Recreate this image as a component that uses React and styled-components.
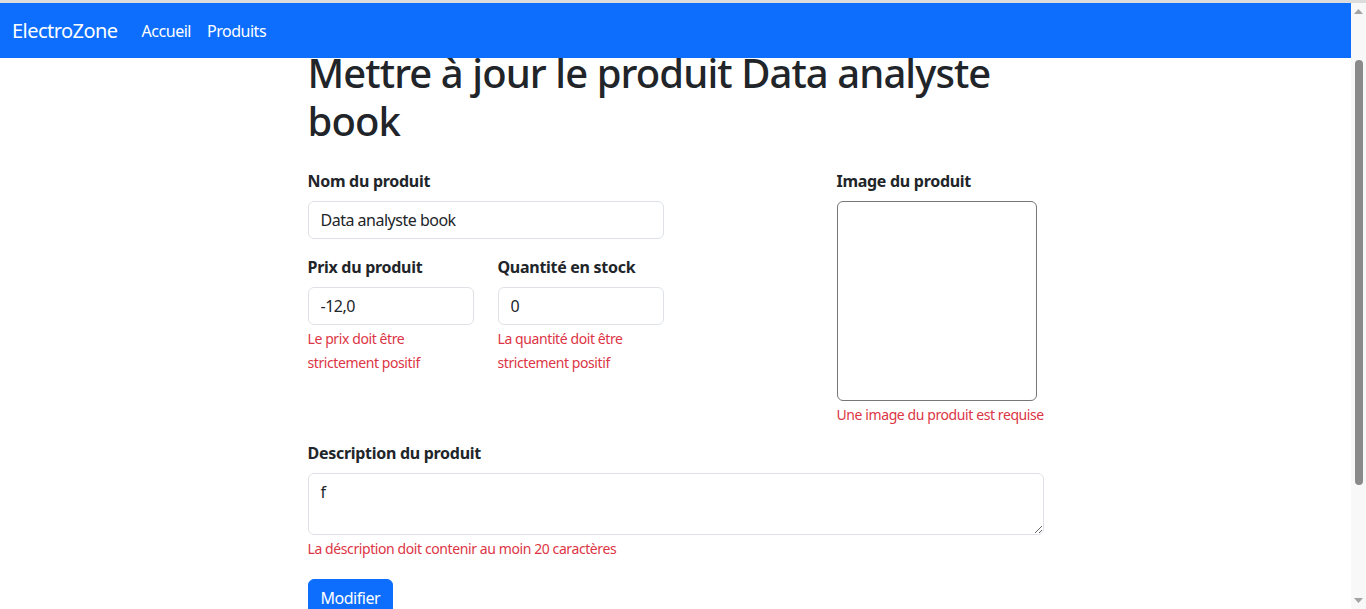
import React from "react";
import styled, { createGlobalStyle } from "styled-components";

const FONT = `"Noto Sans", "Open Sans", Arial, sans-serif`;

const GlobalStyle = createGlobalStyle`
  html, body { margin: 0; padding: 0; height: 100%; overflow: hidden; }
  body { font-family: ${FONT}; color: #212529; background: #fff; letter-spacing: -0.028em; }
  * { box-sizing: border-box; }
`;

const Screen = styled.div`
  display: flex;
  height: 609px;
  border-top: 3px solid #dcdcdc;
`;

const Main = styled.div`
  flex: 1;
  display: flex;
  flex-direction: column;
  overflow: hidden;
  min-width: 0;
`;

const Navbar = styled.nav`
  position: relative;
  z-index: 2;
  flex: none;
  height: 55px;
  background: #0d6efd;
  display: flex;
  align-items: center;
  padding: 0 12px;
`;

const Brand = styled.span`
  font-size: 20px;
  letter-spacing: -0.027em;
  color: #fff;
  margin-right: 16px;
  line-height: 30px;
`;

const NavLink = styled.span`
  font-size: 16px;
  letter-spacing: -0.03em;
  color: #fff;
  padding: 8px;
  line-height: 24px;
`;

const Content = styled.div`
  width: 736px;
  margin: 0 auto;
`;

const Heading = styled.h1`
  font-size: 40px;
  font-weight: 500;
  letter-spacing: -0.023em;
  line-height: 48px;
  margin: -9px 0 0;
  color: #212529;
`;

const FormGrid = styled.div`
  display: grid;
  grid-template-columns: 356px 1fr;
  margin-top: 24px;
`;

const LeftCol = styled.div`
  display: flex;
  flex-direction: column;
`;

const RightCol = styled.div`
  justify-self: end;
  width: 207px;
  display: flex;
  flex-direction: column;
`;

const Field = styled.div`
  display: flex;
  flex-direction: column;
  margin-bottom: ${(p) => p.$mb || 0}px;
  margin-top: ${(p) => p.$mt || 0}px;
`;

const PairRow = styled.div`
  display: grid;
  grid-template-columns: 166px 166px;
  column-gap: 24px;
`;

const Label = styled.label`
  font-size: 16px;
  font-weight: 700;
  letter-spacing: -0.018em;
  line-height: 24px;
  margin-bottom: 8px;
`;

const Input = styled.input`
  height: 38px;
  width: 100%;
  border: 1px solid #dee2e6;
  border-radius: 6px;
  padding: 6px 12px;
  font: 400 16px/24px ${FONT};
  letter-spacing: -0.031em;
  color: #212529;
  background: #fff;
  outline: none;
`;

const TextArea = styled.textarea`
  height: 62px;
  width: 100%;
  border: 1px solid #dee2e6;
  border-radius: 6px;
  padding: 6px 12px;
  font: 400 16px/24px ${FONT};
  letter-spacing: -0.031em;
  color: #212529;
  resize: vertical;
  outline: none;
  display: block;
`;

const ErrorText = styled.div`
  margin-top: 2px;
  color: #dc3545;
  font-size: 14px;
  letter-spacing: -0.029em;
  line-height: 24px;
  white-space: nowrap;
`;

const ImageBox = styled.div`
  width: 200px;
  height: 200px;
  border: 1px solid #777;
  border-radius: 6px;
`;

const Button = styled.button`
  align-self: flex-start;
  margin-top: 18px;
  height: 38px;
  padding: 6px 12px;
  border: 1px solid #0d6efd;
  border-radius: 6px;
  background: #0d6efd;
  color: #fff;
  font: 400 16px/24px ${FONT};
  letter-spacing: -0.03em;
`;

const Scrollbar = styled.div`
  flex: none;
  width: 15px;
  background: #f8f8f8;
  display: flex;
  flex-direction: column;
  align-items: center;
`;

const Arrow = styled.div`
  flex: none;
  height: 17px;
  width: 15px;
  display: flex;
  align-items: center;
  justify-content: center;
`;

const Track = styled.div`
  flex: 1;
  width: 100%;
  display: flex;
  flex-direction: column;
  align-items: center;
  padding-top: 40px;
  padding-bottom: 107px;
`;

const Thumb = styled.div`
  flex: 1;
  width: 8px;
  border-radius: 4px;
  background: #8a8a8a;
`;

export default function App() {
  return (
    <>
      <GlobalStyle />
      <Screen>
        <Main>
          <Navbar>
            <Brand>ElectroZone</Brand>
            <NavLink>Accueil</NavLink>
            <NavLink>Produits</NavLink>
          </Navbar>
          <Content>
            <Heading>Mettre à jour le produit Data analyste book</Heading>
            <FormGrid>
              <LeftCol>
                <Field $mb={16}>
                  <Label>Nom du produit</Label>
                  <Input defaultValue="Data analyste book" />
                </Field>
                <PairRow>
                  <Field>
                    <Label>Prix du produit</Label>
                    <Input defaultValue="-12,0" />
                    <ErrorText>
                      Le prix doit être
                      <br />
                      strictement positif
                    </ErrorText>
                  </Field>
                  <Field>
                    <Label>Quantité en stock</Label>
                    <Input defaultValue="0" />
                    <ErrorText>
                      La quantité doit être
                      <br />
                      strictement positif
                    </ErrorText>
                  </Field>
                </PairRow>
              </LeftCol>
              <RightCol>
                <Label>Image du produit</Label>
                <ImageBox />
                <ErrorText>Une image du produit est requise</ErrorText>
              </RightCol>
            </FormGrid>
            <Field $mt={14}>
              <Label>Description du produit</Label>
              <TextArea defaultValue="f" />
              <ErrorText>La déscription doit contenir au moin 20 caractères</ErrorText>
            </Field>
            <Button>Modifier</Button>
          </Content>
        </Main>
        <Scrollbar>
          <Arrow>
            <svg width="9" height="5" viewBox="0 0 9 5">
              <path d="M0 5 L4.5 0 L9 5 Z" fill="#a3a3a3" />
            </svg>
          </Arrow>
          <Track>
            <Thumb />
          </Track>
          <Arrow>
            <svg width="9" height="5" viewBox="0 0 9 5">
              <path d="M0 0 L4.5 5 L9 0 Z" fill="#a3a3a3" />
            </svg>
          </Arrow>
        </Scrollbar>
      </Screen>
    </>
  );
}
